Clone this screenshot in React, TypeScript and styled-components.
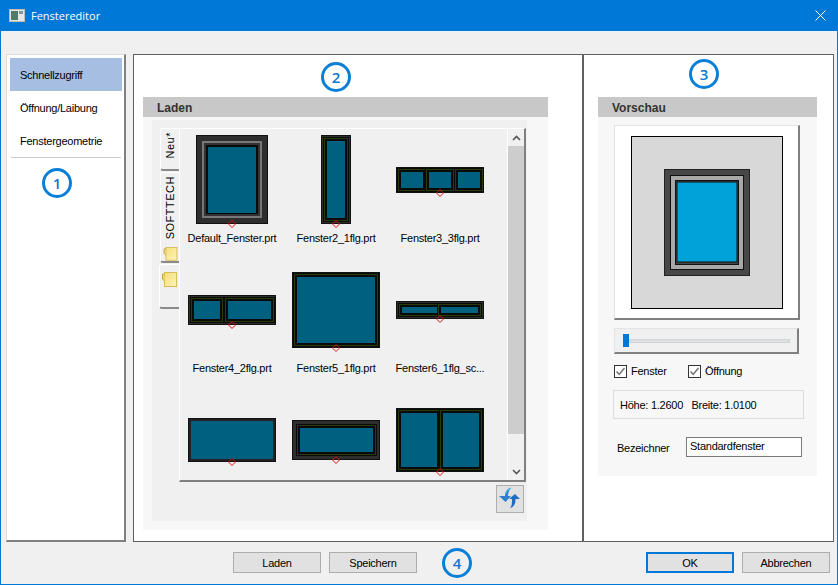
import React from "react";
import styled, { createGlobalStyle } from "styled-components";

const Global = createGlobalStyle`
  html, body { margin: 0; padding: 0; background: #f0f0f0; }
  * { box-sizing: border-box; }
`;

const Win = styled.div`
  width: 838px;
  height: 585px;
  display: flex;
  flex-direction: column;
  background: #f0f0f0;
  border: 1px solid #0078d7;
  border-top: 0;
  font-family: "Liberation Sans", Arial, sans-serif;
  font-size: 11px;
  letter-spacing: -0.25px;
  color: #000;
  overflow: hidden;
`;
const TitleBar = styled.div`
  height: 31px;
  flex: none;
  background: #0078d7;
  color: #fff;
  display: flex;
  align-items: center;
  padding: 0 9px 0 8px;
  gap: 6px;
  font-family: "Open Sans", sans-serif;
  font-size: 11px;
  letter-spacing: 0;
`;
const TitleText = styled.span`
  flex: 1;
`;
const Main = styled.div`
  display: flex;
  height: 488px;
  flex: none;
  margin: 23px 0 0 5px;
`;
const NavPanel = styled.div`
  width: 120px;
  background: #fff;
  border: solid;
  border-width: 1px 2px 2px 1px;
  border-color: #dcdcdc #808080 #808080 #dcdcdc;
  padding: 3px 2px 0 3px;
  margin-right: 7px;
`;
const NavItem = styled.div<{ $active?: boolean }>`
  height: 33px;
  display: flex;
  align-items: center;
  padding-left: 10px;
  background: ${(p) => (p.$active ? "#a5bee2" : "transparent")};
`;
const NavRule = styled.div`
  height: 1px;
  margin: 0 1px 0 1px;
  background: #cfcfcf;
`;
const Badge = styled.div<{ $left: number; $top: number }>`
  width: 30px;
  height: 30px;
  margin: ${(p) => p.$top}px 0 0 ${(p) => p.$left}px;
  flex: none;
  border: 3px solid #0a7fd8;
  border-radius: 50%;
  color: #0a78d2;
  font-family: "Open Sans", sans-serif;
  font-size: 15px;
  font-weight: 600;
  letter-spacing: 0;
  display: flex;
  align-items: center;
  justify-content: center;
`;
const CenterPanel = styled.div`
  width: 451px;
  background: #fff;
  border: 1px solid #606060;
  border-right-width: 2px;
  padding-left: 9px;
`;
const RightPanel = styled.div`
  width: 250px;
  background: #fff;
  border: solid #606060;
  border-width: 1px 1px 1px 0;
  padding-left: 14px;
`;
const Section = styled.div<{ $w: number; $top: number }>`
  width: ${(p) => p.$w}px;
  margin-top: ${(p) => p.$top}px;
`;
const SectionHead = styled.div`
  height: 20px;
  background: #c8c8c8;
  font-weight: bold;
  font-size: 12px;
  letter-spacing: 0;
  color: #333;
  display: flex;
  align-items: center;
  padding: 1px 0 0 14px;
`;
const LadenBody = styled.div`
  height: 413px;
  background: #f7f7f7;
  padding: 3px 21px 9px 9px;
`;
const LadenInner = styled.div`
  height: 401px;
  background: #f0f0f0;
  padding: 8px 1px 0 7px;
`;
const Browser = styled.div`
  display: flex;
  height: 354px;
`;
const Tabs = styled.div`
  width: 20px;
  flex: none;
  display: flex;
  flex-direction: column;
  align-items: flex-end;
`;
const Tab = styled.div<{ $h: number; $active?: boolean }>`
  width: ${(p) => (p.$active ? 20 : 19)}px;
  height: ${(p) => p.$h}px;
  margin-bottom: ${(p) => (p.$active ? 0 : 1)}px;
  background: #f0f0f0;
  border: solid;
  border-width: 1px 0 2px 1px;
  border-color: #fff #fff #8a8a8a #fff;
  border-radius: 3px 0 0 3px;
  display: flex;
  flex-direction: column;
  align-items: center;
  padding-top: ${(p) => (p.$active ? 7 : 3)}px;
  gap: 8px;
`;
const TabText = styled.span`
  writing-mode: vertical-rl;
  transform: rotate(180deg);
  font-size: 11px;
  line-height: 14px;
  letter-spacing: 0.5px;
`;
const ListBox = styled.div`
  width: 347px;
  display: flex;
  background: #f0f0f0;
  border: solid;
  border-width: 1px 2px 2px 1px;
  border-color: #fff #808080 #808080 #fff;
  overflow: hidden;
`;
const Grid = styled.div`
  width: 326px;
  flex: none;
  padding: 6px 0 0 8px;
  display: grid;
  grid-template-columns: repeat(3, 88px);
  grid-auto-rows: 130px;
  column-gap: 16px;
`;
const Cell = styled.div`
  display: flex;
  flex-direction: column;
  align-items: center;
`;
const ThumbBox = styled.div`
  width: 88px;
  height: 89px;
  flex: none;
  display: flex;
  align-items: center;
  justify-content: center;
`;
const ThumbName = styled.div`
  margin-top: 7px;
  height: 14px;
  line-height: 14px;
  white-space: nowrap;
  display: flex;
  justify-content: center;
  width: 88px;
`;
const ScrollBar = styled.div`
  width: 18px;
  flex: none;
  margin-left: 1px;
  border-left: 1px solid #fff;
  display: flex;
  flex-direction: column;
  align-items: stretch;
`;
const ScrollBtn = styled.div`
  height: 17px;
  flex: none;
  display: flex;
  align-items: center;
  justify-content: center;
`;
const ScrollThumb = styled.div`
  height: 288px;
  flex: none;
  background: #cdcdcd;
`;
const ScrollRest = styled.div`
  flex: 1;
`;
const BrowserFoot = styled.div`
  display: flex;
  justify-content: flex-end;
  padding: 3px 2px 0 0;
`;
const IconBtn = styled.div`
  width: 28px;
  height: 28px;
  background: #e1e1e1;
  border: 1px solid #adadad;
  display: flex;
  align-items: center;
  justify-content: center;
`;
const VorschauBody = styled.div`
  height: 359px;
  background: #f7f7f7;
  padding: 8px 0 0 16px;
`;
const PreviewFrame = styled.div`
  width: 186px;
  height: 195px;
  background: #fff;
  border: solid;
  border-width: 1px 2px 2px 1px;
  border-color: #e3e3e3 #808080 #808080 #e3e3e3;
  padding: 10px 0 0 16px;
`;
const SliderBox = styled.div`
  width: 185px;
  height: 26px;
  margin-top: 8px;
  background: #f0f0f0;
  border: solid;
  border-width: 1px 2px 2px 1px;
  border-color: #e3e3e3 #808080 #808080 #e3e3e3;
  display: flex;
  align-items: center;
  padding-left: 8px;
`;
const SliderThumb = styled.div`
  width: 6px;
  height: 13px;
  background: #0078d7;
`;
const SliderTrack = styled.div`
  width: 161px;
  height: 4px;
  background: #dde0e0;
  border: 1px solid #d2d6d6;
`;
const CheckRow = styled.div`
  display: flex;
  margin-top: 10px;
  height: 14px;
  align-items: center;
`;
const CheckLabel = styled.label<{ $w: number }>`
  width: ${(p) => p.$w}px;
  display: flex;
  align-items: center;
  gap: 4px;
`;
const CheckBox = styled.span`
  width: 13px;
  height: 13px;
  background: #fff;
  border: 1px solid #333;
  display: flex;
  align-items: center;
  justify-content: center;
`;
const InfoBox = styled.div`
  width: 191px;
  height: 29px;
  margin: 12px 0 0 -1px;
  border: 1px solid #dcdcdc;
  display: flex;
  align-items: center;
  padding-left: 6px;
  white-space: pre;
`;
const NameRow = styled.div`
  display: flex;
  align-items: center;
  margin-top: 18px;
  padding-left: 3px;
`;
const NameLabel = styled.span`
  width: 69px;
  padding-top: 2px;
`;
const NameInput = styled.div`
  width: 116px;
  height: 20px;
  background: #fff;
  border: 1px solid #7a7a7a;
  padding: 2px 3px;
  line-height: 13px;
`;
const Footer = styled.div`
  flex: 1;
  display: flex;
  align-items: flex-start;
  padding: 10px 0 0 232px;
`;
const Btn = styled.div<{ $default?: boolean }>`
  width: 88px;
  height: 21px;
  flex: none;
  margin-right: 8px;
  background: #e1e1e1;
  border: ${(p) => (p.$default ? "2px solid #0078d7" : "1px solid #adadad")};
  display: flex;
  align-items: center;
  justify-content: center;
`;
const FooterSpace = styled.div`
  width: 174px;
  flex: none;
`;

type Pane = [number, number, number, number];
interface Thumb {
  name?: string;
  w: number;
  h: number;
  panes: Pane[];
  plain?: boolean;
  band?: boolean;
}

const thumbs: Thumb[] = [
  { name: "Default_Fenster.prt", w: 72, h: 89, panes: [[12, 12, 48, 66]], band: true },
  { name: "Fenster2_1flg.prt", w: 30, h: 89, panes: [[6, 6, 18, 77]] },
  { name: "Fenster3_3flg.prt", w: 88, h: 26, panes: [[5, 5, 22, 16], [33, 5, 22, 16], [62, 5, 22, 16]] },
  { name: "Fenster4_2flg.prt", w: 88, h: 30, panes: [[6, 6, 26, 18], [40, 6, 43, 18]] },
  { name: "Fenster5_1flg.prt", w: 88, h: 76, panes: [[5, 5, 78, 66]] },
  { name: "Fenster6_1flg_sc...", w: 88, h: 18, panes: [[6, 6, 37, 6], [45, 6, 37, 6]] },
  { w: 88, h: 44, panes: [[3, 3, 82, 38]], plain: true },
  { w: 88, h: 40, panes: [[8, 8, 73, 24]] },
  { w: 88, h: 64, panes: [[5, 5, 36, 54], [47, 5, 36, 54]] },
];

const WindowThumb = ({ t }: { t: Thumb }) => {
  const cx = t.w / 2;
  return (
    <svg width={t.w} height={t.h} viewBox={`0 0 ${t.w} ${t.h}`} style={{ overflow: "visible", display: "block" }}>
      <rect width={t.w} height={t.h} fill="#111" />
      <rect x={1} y={1} width={t.w - 2} height={t.h - 2} fill={t.plain ? "#222" : "#2e2e2e"} />
      {t.band && (
        <>
          <rect x={6} y={6} width={60} height={77} fill="#777" />
          <rect x={8} y={8} width={56} height={73} fill="#333" />
          <rect x={10} y={10} width={52} height={69} fill="#0a0a0a" />
        </>
      )}
      {t.panes.map(([x, y, w, h], i) => (
        <g key={i}>
          {!t.band && !t.plain && (
            <>
              <rect x={x - 4} y={y - 4} width={w + 8} height={h + 8} fill="#0a0a0a" />
              <rect x={x - 2.5} y={y - 2.5} width={w + 5} height={h + 5} fill="none" stroke="#263d0a" strokeWidth={1} />
            </>
          )}
          <rect x={x} y={y} width={w} height={h} fill="#006080" />
        </g>
      ))}
      <path
        d={`M${cx} ${t.h - 3.5} L${cx + 3.5} ${t.h} L${cx} ${t.h + 3.5} L${cx - 3.5} ${t.h} Z`}
        fill="none"
        stroke="#e01010"
        strokeWidth={1}
      />
    </svg>
  );
};

const Folder = () => (
  <svg width="15" height="15" viewBox="0 0 15 15" style={{ display: "block" }}>
    <defs>
      <linearGradient id="fold" x1="0" y1="0" x2="1" y2="1">
        <stop offset="0" stopColor="#f6de7c" />
        <stop offset="1" stopColor="#fdf3b8" />
      </linearGradient>
    </defs>
    <rect x="2.5" y="0.5" width="12" height="14" fill="url(#fold)" stroke="#d8bb5c" />
    <path d="M2.5 2 L0.5 2 L0.5 7 L2.5 9" fill="#f2d873" stroke="#c4a246" />
  </svg>
);

const PreviewDrawing = () => (
  <svg width="152" height="173" viewBox="0 0 152 173" style={{ display: "block" }}>
    <rect x="0.5" y="0.5" width="151" height="172" fill="#d8d8d8" stroke="#000" />
    <rect x="33.5" y="33.5" width="85" height="106" fill="#474747" stroke="#222" />
    <rect x="39.5" y="39.5" width="73" height="94" fill="#a8a8a8" stroke="#111" />
    <rect x="44.5" y="44.5" width="63" height="84" fill="#444" stroke="#111" />
    <rect x="46" y="46" width="60" height="80" fill="#00a2d9" stroke="#111" />
  </svg>
);

const Check = () => (
  <svg width="11" height="11" viewBox="0 0 11 11">
    <path d="M1.5 5.5 L4.2 8.3 L9.5 2" fill="none" stroke="#777" strokeWidth="1.5" />
  </svg>
);

const Chevron = ({ up }: { up?: boolean }) => (
  <svg width="9" height="6" viewBox="0 0 9 6">
    <path d={up ? "M1 5 L4.5 1.5 L8 5" : "M1 1 L4.5 4.5 L8 1"} fill="none" stroke="#555" strokeWidth="1.6" />
  </svg>
);

const RefreshIcon = () => (
  <svg width="26" height="26" viewBox="0 0 26 26">
    <path d="M14 2 C10 3 8 6 8 10 L2 10 L8.5 16 L14 10 L11 10 C11 7 12 4 14 2 Z" fill="#2f7fd0" />
    <path d="M14 2 C11 3 9 5 8.5 8" fill="none" stroke="#56bce8" strokeWidth="1.2" />
    <path d="M18 8 L12 13 L15 13 C15 17 15 20 13 22 C17 21 18.5 18 18.5 13 L23 13 Z" fill="#1f6cc4" />
  </svg>
);

const AppIcon = () => (
  <svg width="16" height="13" viewBox="0 0 16 13" style={{ display: "block" }}>
    <rect x="0.5" y="0.5" width="15" height="12" fill="#e6e6e6" stroke="#bdbdbd" />
    <rect x="2" y="2" width="7" height="9" fill="#4f7a6c" />
    <rect x="10" y="2" width="4" height="3" fill="#7d9a92" />
  </svg>
);

const CloseIcon = () => (
  <svg width="11" height="11" viewBox="0 0 11 11" style={{ display: "block", marginRight: "2px" }}>
    <path d="M0.5 0.5 L10.5 10.5 M10.5 0.5 L0.5 10.5" stroke="#fff" strokeWidth="1" />
  </svg>
);

export default function App() {
  return (
    <>
      <Global />
      <Win>
        <TitleBar>
          <AppIcon />
          <TitleText>Fenstereditor</TitleText>
          <CloseIcon />
        </TitleBar>
        <Main>
          <NavPanel>
            <NavItem $active>Schnellzugriff</NavItem>
            <NavItem>Öffnung/Laibung</NavItem>
            <NavItem>Fenstergeometrie</NavItem>
            <NavRule />
            <Badge $left={32} $top={10}>1</Badge>
          </NavPanel>
          <CenterPanel>
            <Badge $left={178} $top={7}>2</Badge>
            <Section $w={405} $top={5}>
              <SectionHead>Laden</SectionHead>
              <LadenBody>
                <LadenInner>
                  <Browser>
                    <Tabs>
                      <Tab $h={43}><TabText>Neu*</TabText></Tab>
                      <Tab $h={91}>
                        <TabText>SOFTTECH</TabText>
                        <Folder />
                      </Tab>
                      <Tab $h={45} $active>
                        <Folder />
                      </Tab>
                    </Tabs>
                    <ListBox>
                      <Grid>
                        {thumbs.map((t, i) => (
                          <Cell key={i}>
                            <ThumbBox><WindowThumb t={t} /></ThumbBox>
                            {t.name && <ThumbName>{t.name}</ThumbName>}
                          </Cell>
                        ))}
                      </Grid>
                      <ScrollBar>
                        <ScrollBtn><Chevron up /></ScrollBtn>
                        <ScrollThumb />
                        <ScrollRest />
                        <ScrollBtn><Chevron /></ScrollBtn>
                      </ScrollBar>
                    </ListBox>
                  </Browser>
                  <BrowserFoot>
                    <IconBtn><RefreshIcon /></IconBtn>
                  </BrowserFoot>
                </LadenInner>
              </LadenBody>
            </Section>
          </CenterPanel>
          <RightPanel>
            <Badge $left={91} $top={4}>3</Badge>
            <Section $w={219} $top={8}>
              <SectionHead>Vorschau</SectionHead>
              <VorschauBody>
                <PreviewFrame><PreviewDrawing /></PreviewFrame>
                <SliderBox>
                  <SliderThumb />
                  <SliderTrack />
                </SliderBox>
                <CheckRow>
                  <CheckLabel $w={74}><CheckBox><Check /></CheckBox>Fenster</CheckLabel>
                  <CheckLabel $w={80}><CheckBox><Check /></CheckBox>Öffnung</CheckLabel>
                </CheckRow>
                <InfoBox>{"Höhe: 1.2600   Breite: 1.0100"}</InfoBox>
                <NameRow>
                  <NameLabel>Bezeichner</NameLabel>
                  <NameInput>Standardfenster</NameInput>
                </NameRow>
              </VorschauBody>
            </Section>
          </RightPanel>
        </Main>
        <Footer>
          <Btn>Laden</Btn>
          <Btn>Speichern</Btn>
          <Badge $left={17} $top={-4}>4</Badge>
          <FooterSpace />
          <Btn $default>OK</Btn>
          <Btn>Abbrechen</Btn>
        </Footer>
      </Win>
    </>
  );
}
